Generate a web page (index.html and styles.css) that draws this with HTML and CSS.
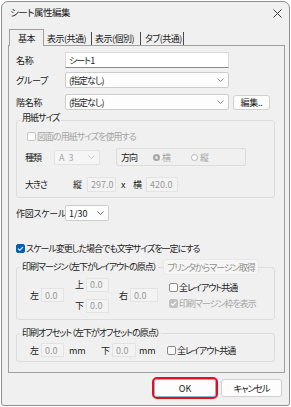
FILE: index.html
```html
<!DOCTYPE html>
<html lang="ja">
<head>
<meta charset="utf-8">
<link rel="stylesheet" href="styles.css">
</head>
<body>
<div class="dialog">
  <div class="titlebar">
    <span class="title">シート属性編集</span>
    <svg class="close" width="9" height="9" viewBox="0 0 9 9"><path d="M0.5 0.5L8.5 8.5M8.5 0.5L0.5 8.5" stroke="#404040" stroke-width="1"/></svg>
  </div>
  <div class="tabs">
    <span class="tab active">基本</span>
    <span class="tab t2">表示(共通)</span>
    <span class="tab t3">表示(個別)</span>
    <span class="tab t4">タブ(共通)</span>
  </div>
  <div class="panel">
    <div class="row">
      <span class="lbl">名称</span>
      <span class="textbox">シート1</span>
    </div>
    <div class="row r2">
      <span class="lbl">グループ</span>
      <span class="combo wide"><span>(指定なし)</span><svg class="chev" width="7" height="4" viewBox="0 0 7 4"><path d="M0.5 0.5L3.5 3.5L6.5 0.5" fill="none" stroke="#8a8a8a"/></svg></span>
    </div>
    <div class="row r3">
      <span class="lbl">階名称</span>
      <span class="combo wide"><span>(指定なし)</span><svg class="chev" width="7" height="4" viewBox="0 0 7 4"><path d="M0.5 0.5L3.5 3.5L6.5 0.5" fill="none" stroke="#8a8a8a"/></svg></span>
      <span class="btn edit">編集..</span>
    </div>

    <div class="group g-paper">
      <div class="gtitle"><span class="gtext">用紙サイズ</span></div>
      <div class="check-row paper-check dis">
        <span class="cb dis"></span><span>図面の用紙サイズを使用する</span>
      </div>
      <div class="prow kind">
        <span class="plbl">種類</span>
        <span class="combo small dis"><span class="latin a3">A 3</span><svg class="chev" width="7" height="4" viewBox="0 0 7 4"><path d="M0.5 0.5L3.5 3.5L6.5 0.5" fill="none" stroke="#c4c4c4"/></svg></span>
        <div class="orient">
          <span class="olbl">方向</span>
          <span class="radio on"></span><span class="rtext">横</span>
          <span class="radio r-tate"></span><span class="rtext">縦</span>
        </div>
      </div>
      <div class="prow sizerow">
        <span class="plbl wide-lbl">大きさ</span>
        <span class="xlbl">縦</span>
        <span class="numbox n297">297.0</span>
        <span class="times">x</span>
        <span class="xlbl yoko">横</span>
        <span class="numbox n420">420.0</span>
      </div>
    </div>

    <div class="row r-scale">
      <span class="lbl">作図スケール</span>
      <span class="combo scale"><span class="latin">1/30</span><svg class="chev" width="7" height="4" viewBox="0 0 7 4"><path d="M0.5 0.5L3.5 3.5L6.5 0.5" fill="none" stroke="#606060"/></svg></span>
    </div>

    <div class="check-row keep">
      <span class="cb checked"><svg width="9" height="9" viewBox="0 0 9 9"><path d="M2 4.6L3.8 6.3L7 2.8" fill="none" stroke="#fff" stroke-width="1.1"/></svg></span><span>スケール変更した場合でも文字サイズを一定にする</span>
    </div>

    <div class="group g-margin">
      <div class="gtitle">
        <span class="gtext">印刷マージン（左下がレイアウトの原点）</span>
        <span class="btn printer">プリンタからマージン取得</span>
      </div>
      <div class="mgrid">
        <div class="mcol c-left"><span class="ml">左</span><span class="numbox sm">0.0</span></div>
        <div class="mcol c-mid">
          <div class="mline"><span class="ml">上</span><span class="numbox sm">0.0</span></div>
          <div class="mline"><span class="ml">下</span><span class="numbox sm">0.0</span></div>
        </div>
        <div class="mcol c-right"><span class="ml">右</span><span class="numbox md">0.0</span></div>
        <div class="mcol c-checks">
          <div class="check-row"><span class="cb"></span><span>全レイアウト共通</span></div>
          <div class="check-row dis"><span class="cb checked dis"><svg width="9" height="9" viewBox="0 0 9 9"><path d="M2 4.6L3.8 6.3L7 2.8" fill="none" stroke="#fff" stroke-width="1.1"/></svg></span><span>印刷マージン枠を表示</span></div>
        </div>
      </div>
    </div>

    <div class="group g-offset">
      <div class="gtitle"><span class="gtext">印刷オフセット（左下がオフセットの原点）</span></div>
      <div class="orow">
        <span class="ml">左</span><span class="numbox sm">0.0</span>
        <span class="mm">mm</span>
        <span class="ml shita">下</span><span class="numbox ob">0.0</span>
        <span class="mm mm2">mm</span>
        <div class="check-row ocheck"><span class="cb"></span><span>全レイアウト共通</span></div>
      </div>
    </div>
  </div>
  <div class="buttons">
    <span class="btn ok">OK</span>
    <span class="btn cancel">キャンセル</span>
  </div>
</div>
</body>
</html>
```
FILE: styles.css
```css
* { box-sizing: border-box; }
html, body { margin: 0; padding: 0; background: #ffffff; }
body {
  font-family: "Noto Sans CJK JP", "Noto Sans", sans-serif;
  font-size: 9px;
  letter-spacing: -1px;
  line-height: 1;
  color: #1b1b1b;
  font-feature-settings: "palt";
}
.latin, .numbox, .mm, .times, .ok { letter-spacing: 0; }
.a3 { word-spacing: 2px; padding-left: 1px; }
.dialog {
  width: 289px;
  height: 405px;
  margin: 1px 0 0 1px;
  border: 1px solid #8e8e8e;
  border-radius: 7px 7px 3px 3px;
  background: #f0f0f0;
  display: flex;
  flex-direction: column;
}
.titlebar {
  height: 22px;
  display: flex;
  align-items: center;
  justify-content: space-between;
  padding: 0 7px 0 8px;
}
.title { font-size: 9.5px; letter-spacing: -0.5px; }
.tabs {
  display: flex;
  align-items: flex-end;
  height: 16px;
  margin: 5px 0 0 7px;
}
.tab {
  height: 13px;
  display: flex;
  align-items: center;
  border-right: 1px solid #4a4a4a;
  white-space: nowrap;
  letter-spacing: -0.5px;
}
.tab.active {
  height: 17px;
  width: 35px;
  border: 1px solid #a0a0a0;
  border-bottom: none;
  background: #f0f0f0;
  margin-bottom: -1px;
  justify-content: center;
  position: relative;
  z-index: 1;
}
.t2 { width: 48px; padding-left: 3px; }
.t3 { width: 49px; padding-left: 3px; }
.t4 { width: 43px; padding-left: 4px; }
.panel {
  margin-left: 6px;
  width: 277px;
  height: 328px;
  border: 1px solid #a0a0a0;
  padding: 6px 0 0 7px;
  display: flex;
  flex-direction: column;
}
.row { display: flex; align-items: center; height: 16px; }
.r2 { margin-top: 4px; }
.r3 { margin-top: 6px; }
.lbl { width: 49px; flex: none; white-space: nowrap; letter-spacing: -0.3px; }
.textbox {
  width: 164px; height: 16px;
  background: #fff;
  border: 1px solid #dadada;
  border-bottom-color: #8a8a8a;
  padding-left: 3px;
  display: flex; align-items: center;
}
.combo {
  height: 16px;
  background: #fdfdfd;
  border: 1px solid #cdcdcd;
  border-radius: 2px;
  padding: 0 4px 0 3px;
  display: flex; align-items: center; justify-content: space-between;
  flex: none;
}
.combo.wide { width: 164px; }
.combo.small { width: 46px; height: 15px; }
.combo.scale { width: 44px; }
.combo.dis { background: #f5f5f5; border-color: #e2e2e2; color: #a6a6a6; }
.btn {
  display: flex; align-items: center; justify-content: center;
  background: #fdfdfd;
  border: 1px solid #d0d0d0;
  border-radius: 3px;
  white-space: nowrap;
  flex: none;
}
.edit { width: 37px; height: 15px; margin-left: 4px; letter-spacing: -0.3px; }
.group {
  width: 259px;
  border: 1px solid #dcdcdc;
  border-radius: 3px;
  display: flex;
  flex-direction: column;
  padding-left: 8px;
}
.gtitle { display: flex; align-items: center; height: 14px; margin: -10px 0 0 -5px; }
.gtext { background: #f0f0f0; padding: 0 2px; line-height: 14px; white-space: nowrap; }
.g-paper { margin-top: 10px; height: 78px; }
.check-row { display: flex; align-items: center; height: 12px; white-space: nowrap; }
.check-row.dis { color: #a6a6a6; }
.cb {
  width: 9px; height: 9px;
  border: 1px solid #8a8a8a;
  border-radius: 2px;
  background: #fbfbfb;
  margin-right: 1px;
  flex: none;
  display: flex;
}
.cb.dis { border-color: #c6c6c6; }
.cb.checked { background: #005fb8; border-color: #005fb8; }
.cb.checked.dis { background: #c2c2c2; border-color: #c2c2c2; }
.cb svg { margin: -1px; }
.paper-check { margin-top: 5px; padding-left: 2px; }
.prow { display: flex; align-items: center; }
.kind { margin-top: 6px; height: 18px; }
.plbl { width: 29px; }
.plbl.wide-lbl { width: 48px; }
.orient {
  margin-left: 16px;
  width: 130px; height: 18px;
  border: 1px solid #dcdcdc;
  border-radius: 2px;
  display: flex; align-items: center;
  padding-left: 4px;
}
.olbl { width: 32px; }
.radio {
  width: 7px; height: 7px;
  border-radius: 50%;
  border: 1px solid #b5b5b5;
  background: #fbfbfb;
  margin-right: 2px;
}
.radio.on { border: 2px solid #a6a6a6; background: #e6e6e6; }
.rtext { color: #a6a6a6; }
.r-tate { margin-left: 21px; }
.sizerow { margin-top: 11px; height: 15px; }
.xlbl { width: 14px; }
.numbox {
  height: 15px;
  background: #f3f3f3;
  border: 1px solid #e3e3e3;
  color: #9a9a9a;
  padding-left: 3px;
  display: flex; align-items: center;
  flex: none;
}
.n297 { width: 29px; }
.times { margin-left: 5px; width: 12px; }
.yoko { width: 13px; }
.n420 { width: 32px; }
.r-scale { margin-top: 7px; }
.keep { margin-top: 21px; }
.g-margin { margin-top: 13px; height: 53px; }
.g-margin .gtitle { height: 16px; margin-top: -9px; }
.printer {
  margin-left: auto; margin-right: 15px;
  width: 96px; height: 16px;
  background: #f5f5f5; border-color: #e8e8e8;
  color: #8e8e8e;
}
.mgrid { display: flex; align-items: center; margin-top: 3px; height: 34px; }
.mcol { display: flex; align-items: center; }
.c-left { margin-left: 5px; }
.ml { width: 11px; flex: none; }
.numbox.sm { width: 23px; height: 14px; }
.numbox.md { width: 28px; height: 14px; }
.c-mid { flex-direction: column; align-items: flex-start; margin-left: 11px; gap: 7px; }
.mline { display: flex; align-items: center; }
.c-right { margin-left: 10px; }
.c-checks { flex-direction: column; align-items: flex-start; margin-left: 11px; gap: 4px; }
.g-offset { margin-top: 13px; height: 29px; }
.g-offset .gtitle { height: 16px; margin-top: -9px; }
.orow { display: flex; align-items: center; margin-top: 2px; height: 14px; padding-left: 5px; }
.mm { margin-left: 5px; width: 14px; }
.shita { margin-left: 18px; }
.numbox.ob { width: 24px; height: 14px; }
.mm2 { margin-left: 3px; }
.ocheck { margin-left: 14px; }
.buttons {
  display: flex; justify-content: flex-end; gap: 5px;
  margin-top: 6px; padding-right: 7px;
}
.ok, .cancel { height: 18px; }
.ok { width: 62px; border-color: #8fb2dc; outline: 2px solid #e3101b; }
.cancel { width: 61px; }
```
